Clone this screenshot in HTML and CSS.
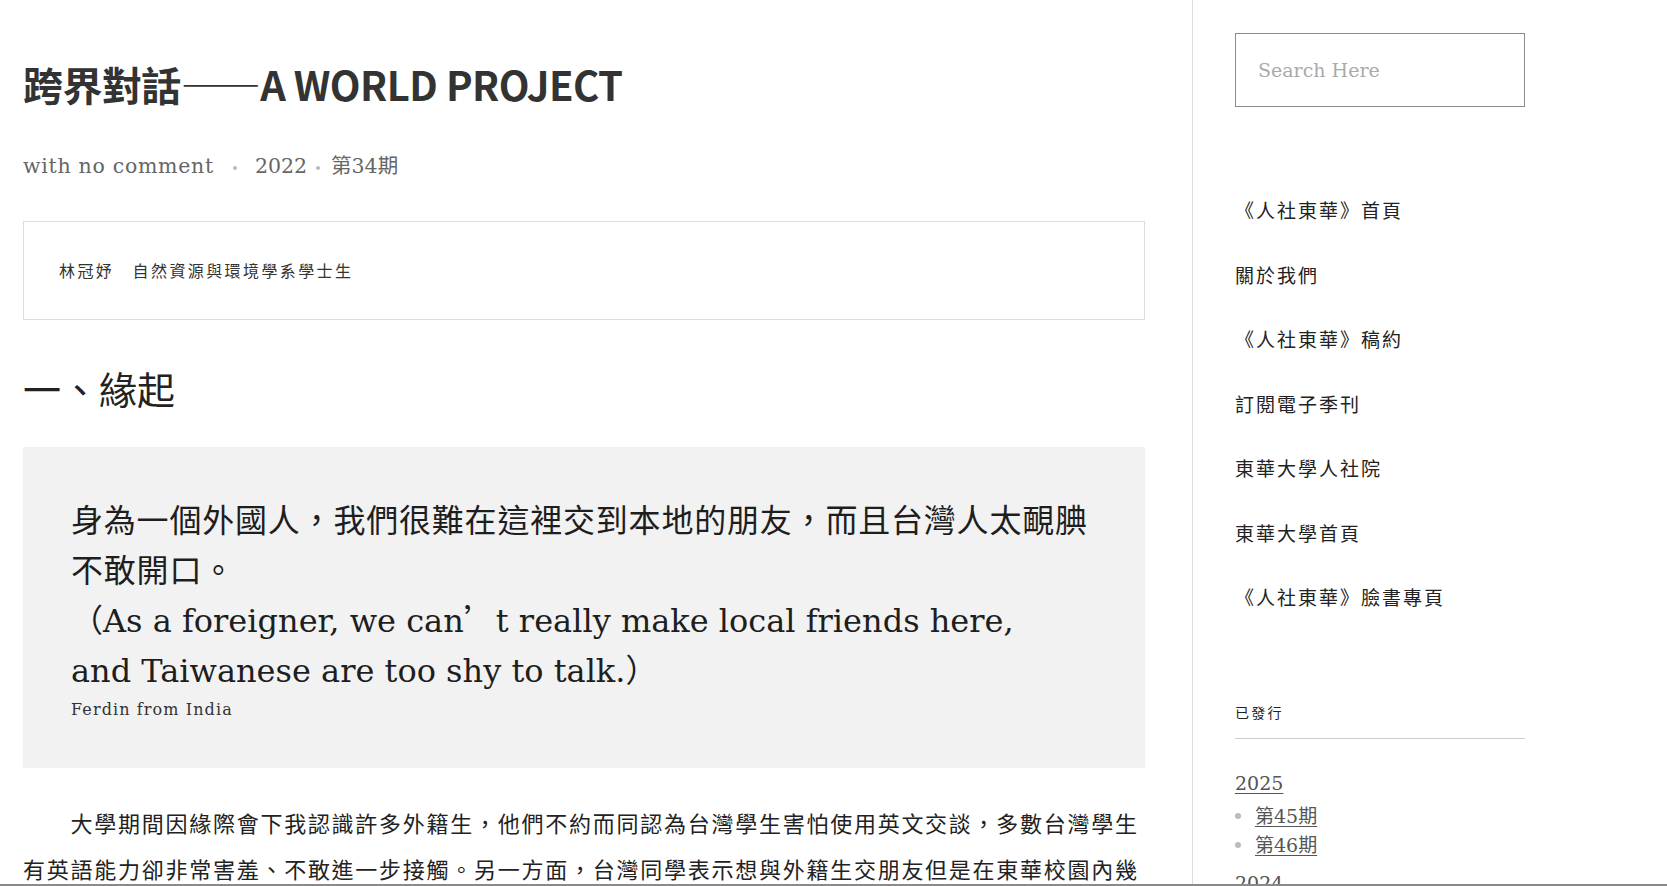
FILE: index.html
```html
<!DOCTYPE html>
<html lang="zh-Hant">
<head>
<meta charset="utf-8">
<title>跨界對話——A WORLD PROJECT</title>
<link rel="stylesheet" href="styles.css">
</head>
<body>
<div class="page">
  <main class="main">
    <h1 class="title">跨界對話——A WORLD PROJECT</h1>
    <div class="meta"><span class="meta-comment">with no comment</span><span class="sep sep-1"></span><span>2022</span><span class="sep sep-2"></span><span>第34期</span></div>
    <div class="author">林冠妤　自然資源與環境學系學士生</div>
    <h2 class="section">一、緣起</h2>
    <blockquote class="quote">
      <p class="quote-text"><span class="zh">身為一個外國人，我們很難在這裡交到本地的朋友，而且台灣人太靦腆不敢開口。</span><br>（As a foreigner, we can<span class="cjk">’</span>t really make local friends here,<br>and Taiwanese are too shy to talk.<span class="cjk">）</span></p>
      <cite class="quote-cite">Ferdin from India</cite>
    </blockquote>
    <p class="body-text">　　大學期間因緣際會下我認識許多外籍生，他們不約而同認為台灣學生害怕使用英文交談，多數台灣學生有英語能力卻非常害羞、不敢進一步接觸。另一方面，台灣同學表示想與外籍生交朋友但是在東華校園內幾乎沒有機會，也不知道該如何開始。</p>
  </main>
  <aside class="sidebar">
    <input class="search" type="text" placeholder="Search Here">
    <ul class="menu">
      <li><a href="#">《人社東華》首頁</a></li>
      <li><a href="#">關於我們</a></li>
      <li><a href="#">《人社東華》稿約</a></li>
      <li><a href="#">訂閱電子季刊</a></li>
      <li><a href="#">東華大學人社院</a></li>
      <li><a href="#">東華大學首頁</a></li>
      <li><a href="#">《人社東華》臉書專頁</a></li>
    </ul>
    <h4 class="widget-title">已發行</h4>
    <div class="archive">
      <a class="year" href="#">2025</a>
      <ul class="issues">
        <li><a href="#">第45期</a></li>
        <li><a href="#">第46期</a></li>
      </ul>
      <a class="year year-next" href="#">2024</a>
    </div>
  </aside>
</div>
</body>
</html>
```
FILE: styles.css
```css
* {
  box-sizing: border-box;
}

html, body {
  margin: 0;
  padding: 0;
  background: #fff;
}

body {
  font-family: "Noto Sans CJK TC", sans-serif;
  color: #222;
}

.page {
  display: grid;
  grid-template-columns: 1192px 1fr;
  height: 886px;
  overflow: hidden;
  border-bottom: 2px solid #8a8a8a;
}

/* ---------- main column ---------- */
.main {
  padding: 0 47px 0 23px;
}

.title {
  margin: 60px 0 0;
  font-family: "Noto Sans CJK TC", sans-serif;
  font-weight: 700;
  font-size: 40px;
  line-height: 48px;
  color: #333;
  letter-spacing: -0.55px;
}

.meta {
  margin-top: 43px;
  font-family: "DejaVu Serif", "Noto Sans CJK TC", serif;
  font-size: 20.5px;
  line-height: 30px;
  color: #666;
  white-space: nowrap;
}

.meta-comment {
  letter-spacing: 0.7px;
}

.sep {
  display: inline-block;
  width: 4px;
  height: 4px;
  border-radius: 50%;
  background: #bbb;
  vertical-align: middle;
}

.sep-1 {
  margin: 0 18px 0 19px;
}

.sep-2 {
  margin: 0 11px 0 9px;
}

.author {
  margin-top: 40px;
  border: 1px solid #ddd;
  padding: 36px 34px 37px 35px;
  font-size: 16px;
  line-height: 24px;
  letter-spacing: 2.4px;
  color: #333;
}

.section {
  margin: 43px 0 34px;
  font-size: 38px;
  line-height: 50px;
  font-weight: 400;
  color: #222;
}

.quote {
  margin: 0;
  background: #f2f2f2;
  padding: 49px 48px 44px;
}

.quote-text {
  margin: 0;
  font-family: "DejaVu Serif", "Noto Sans CJK TC", serif;
  font-size: 32px;
  line-height: 50px;
  color: #1e1e1e;
}

.quote-text .zh {
  letter-spacing: 0.8px;
}

.quote-text .cjk {
  font-family: "Noto Sans CJK TC", sans-serif;
  line-height: 1;
}

.quote-cite {
  display: block;
  font-style: normal;
  font-family: "DejaVu Serif", serif;
  font-size: 16px;
  line-height: 28px;
  letter-spacing: 1.1px;
  color: #333;
}

.body-text {
  margin: 31px 0 0;
  font-size: 22px;
  line-height: 46px;
  letter-spacing: 1.74px;
  color: #222;
}

/* ---------- sidebar ---------- */
.sidebar {
  border-left: 1px solid #ddd;
  padding: 33px 0 0 42px;
}

.search {
  display: block;
  width: 290px;
  height: 74px;
  margin: 0;
  border: 1px solid #8c8c8c;
  border-radius: 0;
  padding: 0 0 0 22px;
  font-family: "DejaVu Serif", serif;
  font-size: 19px;
  color: #333;
  background: #fff;
  outline: none;
}

.search::placeholder {
  color: #aaa;
}

.menu {
  list-style: none;
  margin: 71px 0 0;
  padding: 0;
}

.menu li {
  padding: 20px 0;
  font-size: 19px;
  line-height: 24.5px;
  letter-spacing: 2px;
}

.menu a {
  color: #222;
  text-decoration: none;
}

.widget-title {
  margin: 72px 0 0;
  width: 290px;
  padding-bottom: 16px;
  border-bottom: 1px solid #ccc;
  font-size: 14px;
  line-height: 20px;
  font-weight: 400;
  letter-spacing: 2.3px;
  color: #222;
}

.archive {
  font-family: "DejaVu Serif", "Noto Sans CJK TC", serif;
  font-size: 19px;
}

.year {
  display: block;
  margin-top: 30px;
  line-height: 28px;
  color: #555;
  text-decoration: underline;
  text-underline-offset: 3px;
  width: max-content;
}

.year-next {
  margin-top: 9px;
}

.issues {
  list-style: none;
  margin: 5px 0 0;
  padding: 0;
}

.issues li {
  display: flex;
  align-items: center;
  gap: 14px;
  line-height: 29px;
}

.issues li::before {
  content: "";
  width: 6px;
  height: 6px;
  border-radius: 50%;
  background: #bbb;
  flex: none;
}

.issues a {
  color: #555;
  text-decoration: underline;
  text-underline-offset: 3px;
}
```
